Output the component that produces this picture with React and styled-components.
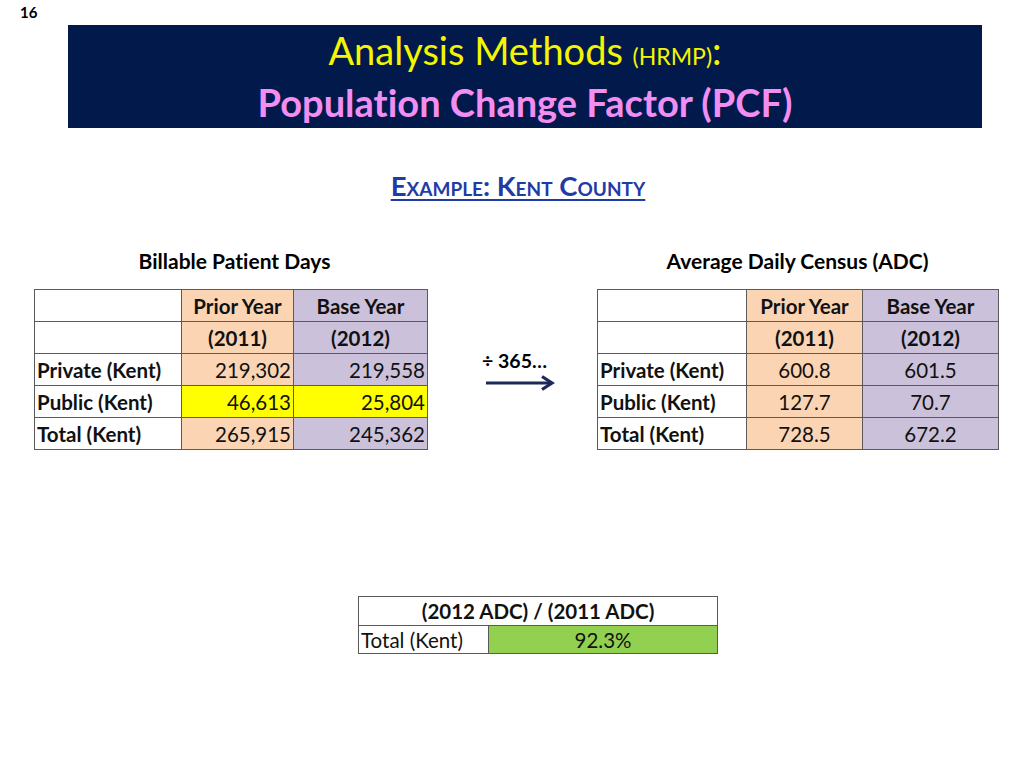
import React from "react";
import styled, { createGlobalStyle } from "styled-components";

const GlobalStyle = createGlobalStyle`
  html, body {
    margin: 0;
    padding: 0;
    background: #ffffff;
  }
  body {
    font-family: Lato, "Open Sans", "Liberation Sans", sans-serif;
    font-variant-ligatures: none;
    color: #000000;
  }
`;

const Slide = styled.div`
  width: 1024px;
  height: 768px;
  padding-top: 5px;
  box-sizing: border-box;
  overflow: hidden;
`;

const PageNumber = styled.div`
  height: 20px;
  padding-left: 20px;
  font-size: 15px;
  font-weight: 700;
  line-height: 14px;
`;

const Banner = styled.header`
  margin-left: 68px;
  width: 914px;
  height: 103px;
  background: #011a4b;
  display: flex;
  flex-direction: column;
  align-items: center;
  padding-top: 3px;
  box-sizing: border-box;
`;

const TitleLine = styled.div`
  color: #f5f500;
  font-size: 38px;
  line-height: 45px;
  white-space: nowrap;
`;

const TitleSmall = styled.span`
  font-size: 23px;
`;

const Subtitle = styled.div`
  color: #f28ef2;
  font-size: 38px;
  font-weight: 700;
  line-height: 46px;
  white-space: nowrap;
`;

const Example = styled.h2`
  margin: 46px 0 0;
  padding-left: 12px;
  text-align: center;
  font-size: 27.5px;
  font-weight: 700;
  font-variant: small-caps;
  color: #1f3ca6;
  line-height: 24px;

  span {
    text-decoration: underline;
    text-decoration-thickness: 2px;
    text-underline-offset: 3px;
  }
`;

const TablesRow = styled.div`
  display: flex;
  align-items: flex-start;
  padding-left: 34px;
  margin-top: 53px;
`;

const Block = styled.section`
  width: ${({ $width }) => $width}px;
  display: flex;
  flex-direction: column;
`;

const Caption = styled.div`
  text-align: center;
  font-size: 21px;
  font-weight: 700;
  line-height: 20px;
  height: 38px;
  padding-left: ${({ $shift }) => $shift || 0}px;
  white-space: nowrap;
`;

const Middle = styled.div`
  width: 170px;
  display: flex;
  flex-direction: column;
  align-items: flex-start;
  padding: 100px 0 0 55px;
  box-sizing: border-box;
`;

const Divide = styled.div`
  font-size: 19.5px;
  font-weight: 700;
  line-height: 20px;
  white-space: nowrap;
`;

const Arrow = styled.svg`
  display: block;
  margin-top: 4px;
  margin-left: 4px;
`;

const Table = styled.table`
  border-collapse: collapse;
  table-layout: fixed;
  width: 100%;
  border: 1px solid #8c8c8c;
`;

const Cell = styled.td`
  height: ${({ $h }) => $h || 32}px;
  padding: 0 2px;
  box-sizing: border-box;
  border: 1px solid #5a5a5a;
  font-size: 20.5px;
  line-height: 20px;
  font-weight: ${({ $bold }) => ($bold ? 700 : 400)};
  text-align: ${({ $align }) => $align || "left"};
  background: ${({ $bg }) => $bg || "transparent"};
  white-space: nowrap;
  vertical-align: middle;
  color: #111;
`;

const BottomWrap = styled.div`
  margin: 146px 0 0 358px;
  width: 359px;
`;

const PEACH = "#fbd4b4";
const LAVENDER = "#ccc1da";
const YELLOW = "#ffff00";
const GREEN = "#92d050";

const patientDays = [
  { label: "Private (Kent)", prior: "219,302", base: "219,558" },
  { label: "Public (Kent)", prior: "46,613", base: "25,804", highlight: true },
  { label: "Total (Kent)", prior: "265,915", base: "245,362" },
];

const census = [
  { label: "Private (Kent)", prior: "600.8", base: "601.5" },
  { label: "Public (Kent)", prior: "127.7", base: "70.7" },
  { label: "Total (Kent)", prior: "728.5", base: "672.2" },
];

const DataTable = ({ widths, rows, numAlign }) => (
  <Table>
    <colgroup>
      {widths.map((w, i) => (
        <col key={i} style={{ width: w }} />
      ))}
    </colgroup>
    <tbody>
      <tr>
        <Cell />
        <Cell $bold $align="center" $bg={PEACH}>Prior Year</Cell>
        <Cell $bold $align="center" $bg={LAVENDER}>Base Year</Cell>
      </tr>
      <tr>
        <Cell />
        <Cell $bold $align="center" $bg={PEACH}>(2011)</Cell>
        <Cell $bold $align="center" $bg={LAVENDER}>(2012)</Cell>
      </tr>
      {rows.map((r) => (
        <tr key={r.label}>
          <Cell $bold>{r.label}</Cell>
          <Cell $align={numAlign} $bg={r.highlight ? YELLOW : PEACH}>{r.prior}</Cell>
          <Cell $align={numAlign} $bg={r.highlight ? YELLOW : LAVENDER}>{r.base}</Cell>
        </tr>
      ))}
    </tbody>
  </Table>
);

export default function App() {
  return (
    <>
      <GlobalStyle />
      <Slide>
        <PageNumber>16</PageNumber>
        <Banner>
          <TitleLine>
            Analysis Methods <TitleSmall>(HRMP)</TitleSmall>:
          </TitleLine>
          <Subtitle>Population Change Factor (PCF)</Subtitle>
        </Banner>

        <Example>
          <span>Example: Kent County</span>
        </Example>

        <TablesRow>
          <Block $width={393}>
            <Caption $shift={8}>Billable Patient Days</Caption>
            <DataTable widths={[147, 112, 134]} rows={patientDays} numAlign="right" />
          </Block>

          <Middle>
            <Divide>÷ 365…</Divide>
            <Arrow width="70" height="16" viewBox="0 0 70 16">
              <path d="M0 8 H64" stroke="#1b2a58" strokeWidth="3.2" fill="none" />
              <path d="M56 1.5 L66 8 L56 14.5" stroke="#1b2a58" strokeWidth="3.2" fill="none" strokeLinejoin="miter" />
            </Arrow>
          </Middle>

          <Block $width={401}>
            <Caption>Average Daily Census (ADC)</Caption>
            <DataTable widths={[149, 116, 136]} rows={census} numAlign="center" />
          </Block>
        </TablesRow>

        <BottomWrap>
          <Table>
            <colgroup>
              <col style={{ width: 130 }} />
              <col style={{ width: 229 }} />
            </colgroup>
            <tbody>
              <tr>
                <Cell colSpan={2} $h={29} $bold $align="center">(2012 ADC) / (2011 ADC)</Cell>
              </tr>
              <tr>
                <Cell $h={28}>Total (Kent)</Cell>
                <Cell $h={28} $align="center" $bg={GREEN}>92.3%</Cell>
              </tr>
            </tbody>
          </Table>
        </BottomWrap>
      </Slide>
    </>
  );
}
